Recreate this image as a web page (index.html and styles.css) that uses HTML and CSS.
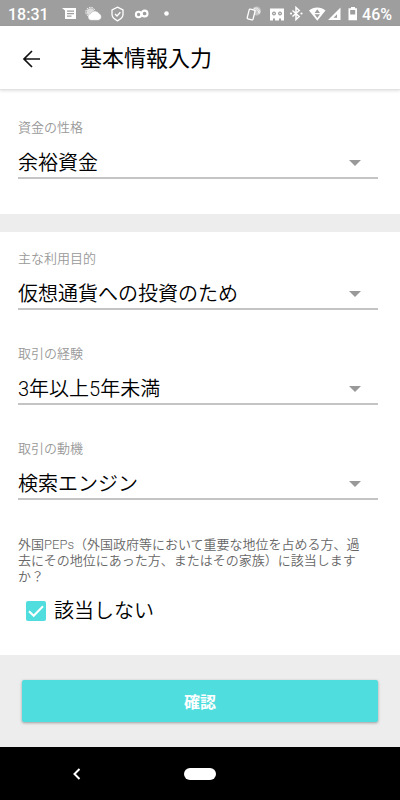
FILE: index.html
```html
<!DOCTYPE html>
<html lang="ja">
<head>
<meta charset="utf-8">
<meta name="viewport" content="width=device-width, initial-scale=1">
<title>基本情報入力</title>
<link rel="stylesheet" href="styles.css">
</head>
<body>
<div class="statusbar">
  <span class="clock">18:31</span>
  <svg class="notices" width="110" height="16" viewBox="0 0 110 16" aria-hidden="true">
    <path fill="#fff" fill-rule="evenodd" d="M0 2h14v11H3V4.500zM5 4.500v1.300h7V4.500zM5 7v1.300h7V7zM5 9.500v1.300h4.500V9.500z"/>
    <circle cx="28.500" cy="6" r="3.800" fill="#ddd"/>
    <circle cx="28.500" cy="6" r="4.700" fill="none" stroke="#fff" stroke-dasharray="1.500 1"/>
    <path fill="#fff" stroke="#9e9e9e" stroke-width=".4" d="M29 14.300a3.400 3.400 0 0 1-.3-6.700 4.800 4.800 0 0 1 8.500 0 3.500 3.500 0 0 1-.7 6.700z"/>
    <path fill="none" stroke="#fff" stroke-width="1.300" d="M55.500 1.200l5.500 2.600v4.700c0 3-2.600 4.800-5.500 6.300-2.900-1.500-5.500-3.300-5.500-6.300V3.800zM53 8l2 2 3.400-3.700"/>
    <circle cx="76.600" cy="8.500" r="2.700" fill="none" stroke="#fff" stroke-width="2.100"/>
    <circle cx="82.600" cy="7.500" r="2.900" fill="none" stroke="#fff" stroke-width="2.100"/>
    <circle cx="104.500" cy="7.500" r="2.300" fill="#fff"/>
  </svg>
  <svg class="signals" width="112" height="16" viewBox="0 0 112 16" aria-hidden="true">
    <circle cx="10.500" cy="5" r="4.500" fill="#c4c4c4"/>
    <path fill="none" stroke="#eee" d="M8 2.500a4 4 0 0 1 5.500 5M9 4.500a2 2 0 0 1 3 3"/>
    <rect x="2" y="3.500" width="6" height="10" rx="1" transform="rotate(14 5 9)" fill="#9e9e9e" stroke="#fff" stroke-width="1.300"/>
    <path fill="#fff" fill-rule="evenodd" d="M24 2.500h14v12h-3v-2h-2v2h-4v-2h-2v2h-3zM28 5.500a2 2 0 1 0 .01 0zM34 5.500a2 2 0 1 0 .01 0z"/>
    <circle cx="28" cy="7.500" r=".7" fill="#fff"/>
    <circle cx="34" cy="7.500" r=".7" fill="#fff"/>
    <path fill="none" stroke="#fff" stroke-width="1.500" d="M46.500 4.500l6.700 6-3.200 3V1.500l3.200 3-6.700 6"/>
    <circle cx="45" cy="7.500" r="1.100" fill="#fff"/>
    <circle cx="55.500" cy="7.500" r="1.100" fill="#fff"/>
    <path fill="#fff" d="M63 4.500c4.500-4 12-4 16.500 0l-8.200 10.300z"/>
    <path fill="#9e9e9e" d="M71.300 3.300l2.700 3.700h-5.400zM71.300 12l2.700-3.700h-5.400z"/>
    <path fill="#fff" fill-rule="evenodd" d="M94.500 1.500V14H82zM91 8.300l-3.500 3.500H91z"/>
    <path fill="#fff" fill-rule="evenodd" d="M105 1h4v1.300h2v12h-8.500v-12h2.500zM104.200 4v4.500h5V4z"/>
  </svg>
  <span class="battery">46%</span>
</div>

<header class="appbar">
  <button class="back" type="button" aria-label="戻る">
    <svg width="20" height="20" viewBox="0 0 20 20" fill="none" stroke="#111" stroke-width="1.700"><path d="M18 10H2.500M10 2L2 10l8 8"/></svg>
  </button>
  <h1>基本情報入力</h1>
</header>

<main>
  <section class="card first">
    <div class="field">
      <label for="funds">資金の性格</label>
      <div class="picker"><select id="funds"><option>余裕資金</option></select></div>
    </div>
  </section>

  <section class="card second">
    <div class="field">
      <label for="purpose">主な利用目的</label>
      <div class="picker"><select id="purpose"><option>仮想通貨への投資のため</option></select></div>
    </div>
    <div class="field">
      <label for="experience">取引の経験</label>
      <div class="picker"><select id="experience"><option>3年以上5年未満</option></select></div>
    </div>
    <div class="field">
      <label for="motive">取引の動機</label>
      <div class="picker"><select id="motive"><option>検索エンジン</option></select></div>
    </div>
    <div class="peps">
      <p>外国PEPs（外国政府等において重要な地位を占める方、過去にその地位にあった方、またはその家族）に該当しますか？</p>
      <label class="check">
        <input type="checkbox" checked>
        <svg width="20" height="20" viewBox="0 0 20 20" aria-hidden="true"><rect width="20" height="20" rx="2"/><path d="M3 10.300l4.700 4.500L17 5.300"/></svg>
        <span>該当しない</span>
      </label>
    </div>
  </section>

  <div class="actions"><button class="submit" type="button">確認</button></div>
</main>

<nav class="navbar">
  <button type="button" aria-label="前へ"><svg width="10" height="14" viewBox="0 0 10 14" fill="none" stroke="#fff" stroke-width="2"><path d="M7.500 2L2.500 7l5 5"/></svg></button>
  <button class="home" type="button" aria-label="ホーム"></button>
</nav>
</body>
</html>
```
FILE: styles.css
```css
* {
  box-sizing: border-box;
}

body {
  margin: 0;
  min-height: 100vh;
  display: flex;
  flex-direction: column;
  background: #ededed;
  color: #000;
  font-family: Roboto, "Noto Sans CJK JP", sans-serif;
}

button,
select {
  font: inherit;
  color: inherit;
  border: 0;
  padding: 0;
  background: none;
}

.statusbar {
  display: flex;
  align-items: center;
  height: 26px;
  padding: 2px 8px 0;
  background: #9e9e9e;
  color: #fff;
  font-size: 16px;
  font-weight: 500;
}

.clock {
  width: 54px;
}

.signals {
  margin-left: auto;
  margin-right: 4px;
}

.appbar {
  position: relative;
  display: flex;
  align-items: center;
  gap: 38px;
  height: 64px;
  padding: 2px 22px 0;
  background: #fff;
  border-bottom: 1px solid #e2e2e2;
  box-shadow: 0 1px 3px rgba(0, 0, 0, 0.12);
}

.back,
.back svg {
  display: block;
}

h1 {
  margin: 0;
  font-size: 22px;
  font-weight: 400;
  line-height: 32px;
}

main {
  flex: 1;
}

.card {
  display: flex;
  flex-direction: column;
  gap: 34px;
  background: #fff;
}

.first {
  padding: 28px 22px 35px 18px;
}

.second {
  margin-top: 18px;
  padding: 17px 22px 27px 18px;
}

.field label {
  display: block;
  color: #999;
  font-size: 13px;
  font-weight: 350;
  line-height: 20px;
}

.picker {
  position: relative;
  border-bottom: 2px solid #c4c4c4;
}

.picker::after {
  content: "";
  position: absolute;
  right: 17px;
  top: 22px;
  border: 6px solid transparent;
  border-top-color: #999;
  border-bottom: 0;
  pointer-events: none;
}

select {
  display: block;
  width: 100%;
  height: 39px;
  padding-top: 10px;
  appearance: none;
  font-size: 20px;
  font-weight: 350;
}

.peps p {
  margin: 3px 0 0;
  padding-right: 12px;
  color: #666;
  font-size: 13px;
  font-weight: 350;
  line-height: 16px;
}

.check {
  position: relative;
  display: flex;
  align-items: center;
  gap: 8px;
  margin-top: 9px;
  padding-left: 8px;
  font-size: 20px;
  font-weight: 350;
  line-height: 34px;
}

.check input {
  position: absolute;
  width: 20px;
  height: 20px;
  margin: 0;
  opacity: 0;
}

.check rect {
  fill: #50dddd;
}

.check path {
  fill: none;
  stroke: #fff;
  stroke-width: 2;
  visibility: hidden;
}

.check input:checked + svg path {
  visibility: visible;
}

.actions {
  padding: 25px 22px;
}

.submit {
  display: block;
  width: 100%;
  height: 42px;
  border-radius: 2px;
  background: #50dddd;
  color: #fff;
  font-size: 16px;
  font-weight: 700;
  box-shadow: 0 1px 3px rgba(0, 0, 0, 0.35);
}

.navbar {
  display: grid;
  grid-template-columns: 1fr 32px 1fr;
  align-items: center;
  justify-items: center;
  height: 53px;
  background: #000;
}

.navbar button:first-child {
  margin-right: 30px;
}

.navbar svg {
  display: block;
}

.home {
  width: 32px;
  height: 12px;
  border-radius: 6px;
  background: #fff;
}
```
